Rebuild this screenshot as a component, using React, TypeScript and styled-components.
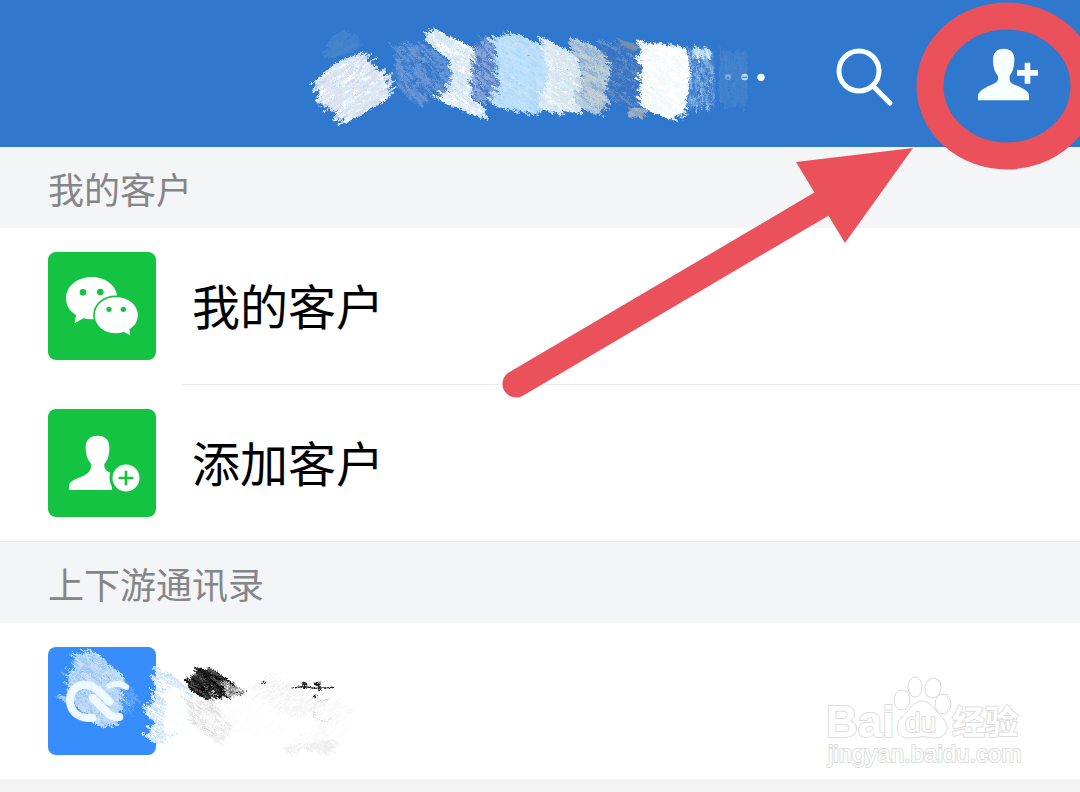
import React from 'react';
import styled, { createGlobalStyle } from 'styled-components';

const GlobalStyle = createGlobalStyle`
  * { box-sizing: border-box; }
  html { background: #f4f4f5; }
  body { margin: 0; font-family: "Noto Sans CJK SC", "Noto Sans", sans-serif; }
  button { font: inherit; color: inherit; }
`;

const Page = styled.div`
  position: relative;
  overflow: hidden;
`;

const Header = styled.header`
  display: grid;
  grid-template-columns: 1fr 480px 1fr;
  height: 147px;
  background: #3077ce;
`;

const Title = styled.h1`
  grid-column: 2;
  margin: 0;
  height: 147px;
  svg { display: block; width: 100%; height: 100%; }
`;

const Actions = styled.div`
  display: flex;
  justify-content: flex-end;
  align-items: center;
  gap: 84px;
  padding: 6px 42px 0 0;
`;

const IconButton = styled.button`
  display: block;
  padding: 0;
  border: 0;
  background: none;
  flex: none;
  svg { display: block; width: 60px; height: 60px; }
`;

const SectionTitle = styled.h2<{ $ruled?: boolean }>`
  margin: 0;
  padding: 15px 48px 13px;
  border-top: ${(p) => (p.$ruled ? '1px solid #ececee' : '0')};
  background: #f4f5f7;
  color: #858688;
  font-size: 36px;
  font-weight: 400;
  line-height: 53px;
`;

const List = styled.ul`
  margin: 0;
  padding: 0;
  list-style: none;
  background: #fff;
`;

const Row = styled.button`
  display: flex;
  align-items: stretch;
  width: 100%;
  min-height: 156px;
  padding: 0 0 0 48px;
  border: 0;
  background: none;
  text-align: left;
`;

const Item = styled.li`
  & + & > ${Row} { min-height: 157px; }
  & + & > ${Row} > span:last-child { border-top: 1px solid #ececec; }
`;

const Tile = styled.span<{ $color: string }>`
  position: relative;
  flex: none;
  align-self: flex-end;
  width: 108px;
  height: 108px;
  margin: 24px 26px 24px 0;
  border-radius: 8px;
  background: ${(p) => p.$color};
  & > svg { display: block; width: 108px; height: 108px; }
`;

const Label = styled.span`
  display: flex;
  flex: 1;
  align-items: center;
  padding: 0 0 4px 10px;
  font-size: 48px;
  line-height: 72px;
  color: #000;
`;

const Smudge = styled.span`
  position: absolute;
  left: 0;
  top: 0;
  svg { display: block; width: 312px; height: 116px; }
`;

const Footer = styled.footer`
  height: 13px;
  background: #f4f4f5;
`;

const Annotation = styled.svg`
  position: absolute;
  right: 0;
  top: 0;
  width: 600px;
  height: 410px;
  pointer-events: none;
`;

const Watermark = styled.svg`
  position: absolute;
  right: 50px;
  bottom: 12px;
  width: 210px;
  height: 110px;
  pointer-events: none;
`;

type Point = [number, number];
interface Patch {
  area: Point[];
  colors: string[];
  count: number;
  dir: Point;
  width?: number;
}

function randomizer(seed: number) {
  let s = seed;
  return () => {
    s = (s * 1664525 + 1013904223) % 4294967296;
    return s / 4294967296;
  };
}

function contains(area: Point[], x: number, y: number) {
  let inside = false;
  for (let i = 0, j = area.length - 1; i < area.length; j = i++) {
    const [xi, yi] = area[i];
    const [xj, yj] = area[j];
    if (yi > y !== yj > y && x < ((xj - xi) * (y - yi)) / (yj - yi) + xi) inside = !inside;
  }
  return inside;
}

/* Scatters short brush strokes over an area, one path for each colour. */
function Brush({ patch, seed }: { patch: Patch; seed: number }) {
  const rnd = randomizer(seed * 7919 + 17);
  const xs = patch.area.map((p) => p[0]);
  const ys = patch.area.map((p) => p[1]);
  const x0 = Math.min(...xs);
  const y0 = Math.min(...ys);
  const w = Math.max(...xs) - x0;
  const h = Math.max(...ys) - y0;
  const layers: { color: string; d: string }[] = [];
  const rounds = 6;
  for (let r = 0; r < rounds; r++) {
    patch.colors.forEach((color) => {
      let d = '';
      const n = patch.count / rounds / patch.colors.length;
      for (let i = 0; i < n; i++) {
        let x = x0 + rnd() * w;
        let y = y0 + rnd() * h;
        for (let t = 0; t < 20 && !contains(patch.area, x, y); t++) {
          x = x0 + rnd() * w;
          y = y0 + rnd() * h;
        }
        const k = rnd() < 0.08 ? 1.8 : 0.1 + rnd() * 0.7;
        d += `M${Math.round(x - patch.dir[0] * k)} ${Math.round(y - patch.dir[1] * k)}l${Math.round(
          patch.dir[0] * 2 * k,
        )} ${Math.round(patch.dir[1] * 2 * k)}`;
      }
      layers.push({ color, d });
    });
  }
  return (
    <g fill="none" strokeWidth={patch.width ?? 4}>
      {layers.map((l, i) => (
        <path key={i} d={l.d} stroke={l.color} />
      ))}
    </g>
  );
}

/* Breaks the edges of the strokes into grain. */
function Grain({ id }: { id: string }) {
  return (
    <filter id={id} x="-5%" y="-5%" width="110%" height="110%" colorInterpolationFilters="sRGB">
      <feTurbulence type="fractalNoise" baseFrequency="0.22" numOctaves="2" seed="4" result="noise" />
      <feDisplacementMap in="SourceGraphic" in2="noise" scale="12" xChannelSelector="R" yChannelSelector="G" />
    </filter>
  );
}

const titlePatches: Patch[] = [
  { area: [[95, 45], [165, 42], [170, 85], [100, 115], [80, 100]], colors: ['#3d80cd', '#4785cb'], count: 350, dir: [12, -8] },
  { area: [[55, 175], [110, 130], [170, 108], [210, 145], [260, 195], [255, 240], [150, 300], [80, 245]], colors: ['#e9f2fa', '#c9d8eb', '#ffffff', '#d9e9f7', '#dde1ee'], count: 2400, dir: [18, -12] },
  { area: [[285, 85], [380, 75], [460, 140], [440, 220], [330, 250], [300, 200]], colors: ['#4b83cd', '#5f91d4', '#3478c8', '#7199d5'], count: 1500, dir: [12, 12] },
  { area: [[380, 60], [420, 35], [545, 100], [520, 150], [515, 235], [560, 270], [535, 290], [420, 240], [460, 205], [460, 130]], colors: ['#e5f4fb', '#c8dff5', '#ffffff', '#d8e8f0'], count: 1800, dir: [14, 9] },
  { area: [[550, 60], [600, 60], [640, 110], [610, 235], [520, 240], [520, 150]], colors: ['#5885cc', '#799bd3', '#4677bf', '#90addb'], count: 1200, dir: [10, 12] },
  { area: [[590, 60], [650, 45], [750, 90], [765, 245], [700, 275], [580, 255], [610, 210]], colors: ['#b8dcf9', '#c8e4fb', '#afd6f7', '#bce1fb'], count: 2400, dir: [18, 11] },
  { area: [[735, 60], [835, 110], [850, 250], [820, 275], [720, 265], [750, 180]], colors: ['#e4f0f7', '#f6fafb', '#cbe2f1', '#dce6ee'], count: 1700, dir: [14, 10] },
  { area: [[820, 60], [890, 85], [930, 125], [910, 245], [890, 280], [840, 260], [855, 170]], colors: ['#a8bfd4', '#b8cad8', '#8bafd5', '#c3d0d8'], count: 1400, dir: [14, 10] },
  { area: [[900, 65], [1000, 80], [1020, 130], [1010, 270], [930, 235], [940, 145]], colors: ['#4e7fbe', '#3b74c0', '#6a91c7', '#3274cb'], count: 1300, dir: [12, 9] },
  { area: [[970, 65], [1020, 80], [1020, 90], [980, 80]], colors: ['#778fae'], count: 40, dir: [12, 8] },
  { area: [[1000, 265], [1040, 270], [1020, 290], [985, 290]], colors: ['#8ba1bd', '#a4b3c4'], count: 70, dir: [10, 6] },
  { area: [[1035, 75], [1160, 90], [1165, 145], [1150, 260], [1105, 295], [1030, 260], [1030, 155]], colors: ['#ffffff', '#f5fbfd', '#ffffff', '#f2f9fc'], count: 2500, dir: [15, 10] },
  { area: [[1160, 90], [1240, 100], [1245, 260], [1160, 260], [1175, 160]], colors: ['#6fa0da', '#518acf', '#8bb7e4', '#3b7bcd'], count: 800, dir: [1, 12] },
  { area: [[1180, 88], [1235, 88], [1230, 115], [1180, 115]], colors: ['#b9dcf3', '#d5eef9'], count: 60, dir: [4, 10] },
  { area: [[1258, 95], [1340, 100], [1340, 255], [1260, 255]], colors: ['#4785cc', '#3f80cc', '#4483cc'], count: 400, dir: [1, 18] },
];

const contactPatches: Patch[] = [
  { area: [[115, 60], [170, 55], [250, 125], [255, 190], [220, 260], [180, 275], [130, 235], [85, 180], [90, 130]], colors: ['#b9d8f6', '#cfe5f9', '#9cc7f6', '#c0dbf5'], count: 1500, dir: [14, 9] },
  { area: [[255, 130], [290, 185], [275, 230], [245, 245]], colors: ['#66a9f5', '#4a99f8'], count: 180, dir: [8, 8], width: 3 },
  { area: [[50, 185], [80, 185], [90, 215]], colors: ['#a5cdf8'], count: 20, dir: [12, 6], width: 3 },
  { area: [[350, 100], [380, 110], [430, 150], [440, 190], [390, 290], [350, 325], [325, 310], [350, 265], [318, 235], [350, 205]], colors: ['#bcdcf8', '#e1effa', '#ffffff', '#d2e6f8'], count: 1300, dir: [13, 9] },
  { area: [[390, 150], [445, 180], [455, 280], [375, 295]], colors: ['#ffffff', '#fbfdfe'], count: 600, dir: [14, 9] },
  { area: [[440, 195], [560, 210], [600, 240], [550, 320], [520, 320], [450, 270]], colors: ['#ffffff', '#f4f4f4', '#d0d0cd', '#ffffff', '#e8e8e8'], count: 900, dir: [11, 8], width: 2 },
  { area: [[530, 210], [620, 200], [740, 290], [700, 310], [590, 290]], colors: ['#ffffff', '#fdfdfd'], count: 700, dir: [14, 9] },
  { area: [[470, 110], [520, 105], [570, 140], [595, 160], [545, 190], [475, 180], [450, 155]], colors: ['#111111', '#333333', '#000000', '#555555', '#202020'], count: 440, dir: [13, 8] },
  { area: [[560, 140], [600, 160], [590, 180], [550, 190]], colors: ['#c9c9c9', '#777777', '#ffffff'], count: 100, dir: [9, 6], width: 2 },
  { area: [[620, 160], [690, 120], [760, 150], [850, 200], [860, 250], [740, 240]], colors: ['#ffffff', '#f3f3f2', '#ededed', '#fafafa'], count: 700, dir: [12, -9], width: 2 },
  { area: [[730, 345], [850, 285], [895, 325], [860, 360], [790, 340], [750, 355]], colors: ['#ebebeb', '#f3f3f3', '#efefef'], count: 350, dir: [10, 8], width: 3 },
  { area: [[720, 340], [830, 280], [860, 200], [930, 210], [920, 300]], colors: ['#fcfcfc', '#fafafa', '#ffffff'], count: 300, dir: [14, -9] },
];

function SearchIcon() {
  return (
    <svg viewBox="0 0 60 60" fill="none" stroke="#f8ffff" aria-hidden="true">
      <circle cx="25" cy="24" r="20" strokeWidth="5" />
      <path d="M40 40L56 56" strokeWidth="5" strokeLinecap="round" />
    </svg>
  );
}

function AddPersonIcon() {
  return (
    <svg viewBox="474 142 180 180" fill="#f8ffff" aria-hidden="true">
      <path d="M551 147C571 147 582 158 583 176C583 199 580 215 569 228V241C571 251 580 254 592 258C611 266 627 277 627 286V302H474V286C476 276 494 265 511 257C523 252 532 249 534 239V229C523 216 519 201 519 178C520 158 531 147 551 147Z" />
      <path d="M614 189h17v22h23v17h-23v24h-17v-24h-23v-17h23z" />
    </svg>
  );
}

function WeChatIcon() {
  return (
    <svg viewBox="54 306 324 324" aria-hidden="true">
      <path fill="#fff" d="M185 381C228 381 262 409 262 445C262 481 228 508 185 508C176 508 168 507 160 505L134 520L138 495C119 484 108 466 108 445C108 409 142 381 185 381Z" />
      <g fill="#15c343">
        <circle cx="159" cy="427" r="10" />
        <circle cx="211" cy="426" r="10" />
      </g>
      <path fill="#fff" stroke="#15c343" strokeWidth="5" d="M258 439C297 439 326 464 326 496C326 514 317 529 301 539L304 560L281 548C274 551 266 552 258 552C219 552 192 527 192 496C192 464 219 439 258 439Z" />
      <g fill="#15c343">
        <circle cx="237" cy="478" r="8" />
        <circle cx="280" cy="478" r="8" />
      </g>
    </svg>
  );
}

function AddCustomerIcon() {
  return (
    <svg viewBox="54 57 324 324" aria-hidden="true">
      <path fill="#fff" d="M203 137C226 137 238 151 238 171C239 193 234 209 223 222C221 238 231 244 246 251V300H117V286C118 275 134 269 157 259C174 252 184 242 184 222C172 209 167 193 167 171C167 151 180 137 203 137Z" />
      <circle cx="288" cy="264" r="45" fill="#fff" stroke="#15c343" strokeWidth="9" />
      <path d="M266 264h44M288 242v44" stroke="#15c343" strokeWidth="8" />
    </svg>
  );
}

function ContactScribble() {
  return (
    <svg viewBox="24 36 936 348" aria-hidden="true">
      <defs><Grain id="contact-grain" /></defs>
      <g filter="url(#contact-grain)">
        {contactPatches.map((p, i) => (
          <Brush key={i} patch={p} seed={i + 31} />
        ))}
      </g>
      <g fill="none" stroke="#eef8ff" strokeWidth="24" strokeLinecap="round" strokeLinejoin="round">
        <path d="M209 200L174 166C158 151 143 148 126 150C103 155 89 174 90 199C92 229 113 247 142 249H157" />
        <path d="M159 190L206 237Q218 248 238 246" />
        <path d="M208 152Q237 139 259 156" strokeWidth="17" />
      </g>
      <g stroke="#222" fill="none" filter="url(#contact-grain)">
        <path d="M755 160L790 154L825 160L880 157" strokeWidth="4" />
        <path d="M785 145l17 2M793 140v22M820 147h20M838 140v28" strokeWidth="7" />
        <path d="M665 143h12M820 181l10 7" strokeWidth="6" />
        <path d="M825 245q-10-40 20-48l24-5M830 250q25 20 45-3" stroke="#c9c9c9" strokeWidth="3" strokeDasharray="5 3" />
      </g>
    </svg>
  );
}

export default function App() {
  return (
    <>
      <GlobalStyle />
      <Page>
        <Header>
          <Title aria-label="通讯录">
            <svg viewBox="0 -60 1440 441" aria-hidden="true">
              <defs><Grain id="title-grain" /></defs>
              <g filter="url(#title-grain)">
                {titlePatches.map((p, i) => (
                  <Brush key={i} patch={p} seed={i + 1} />
                ))}
              </g>
              <circle cx="1284" cy="171" r="9" fill="#7eaedd" />
              <circle cx="1334" cy="171" r="10" fill="#c3e1f4" />
              <circle cx="1284" cy="174" r="4" fill="#4785cc" />
              <path d="M1326 172h16" stroke="#5b91cf" strokeWidth="5" />
              <circle cx="1383" cy="172" r="11" fill="#f8ffff" />
            </svg>
          </Title>
          <Actions>
            <IconButton type="button" aria-label="搜索"><SearchIcon /></IconButton>
            <IconButton type="button" aria-label="添加"><AddPersonIcon /></IconButton>
          </Actions>
        </Header>
        <main>
          <SectionTitle>我的客户</SectionTitle>
          <List>
            <Item>
              <Row type="button">
                <Tile $color="#15c343"><WeChatIcon /></Tile>
                <Label>我的客户</Label>
              </Row>
            </Item>
            <Item>
              <Row type="button">
                <Tile $color="#15c343"><AddCustomerIcon /></Tile>
                <Label>添加客户</Label>
              </Row>
            </Item>
          </List>
          <SectionTitle $ruled>上下游通讯录</SectionTitle>
          <List>
            <Item>
              <Row type="button" aria-label="联系人">
                <Tile $color="#368dfb">
                  <Smudge><ContactScribble /></Smudge>
                </Tile>
                <Label />
              </Row>
            </Item>
          </List>
        </main>
        <Footer />
        <Watermark viewBox="820 670 210 110" aria-hidden="true">
          <g fill="#fff" stroke="#dadada" strokeWidth="1">
            <ellipse cx="902" cy="700" rx="8" ry="10" />
            <ellipse cx="915" cy="687" rx="7" ry="10" />
            <ellipse cx="933" cy="688" rx="8" ry="10" transform="rotate(12 933 688)" />
            <ellipse cx="943" cy="704" rx="8" ry="10" />
            <path d="M922 701C931 701 934 710 941 716C952 727 947 738 935 738C928 738 925 736 920 737C914 738 912 738 907 738C895 737 896 724 901 718C909 712 912 701 922 701Z" />
          </g>
          <g fill="#fff" stroke="#dddddd" strokeWidth="2" paintOrder="stroke" strokeLinejoin="round">
            <g fontFamily='"Liberation Sans", sans-serif'>
              <text x="826" y="737" fontSize="44" fontWeight="700">Bai</text>
              <text x="905" y="732" fontSize="28">du</text>
              <text x="828" y="762" fontSize="24">jingyan.baidu.com</text>
            </g>
            <text x="952" y="734" fontSize="33" fontWeight="700" fontFamily='"Noto Sans CJK SC", sans-serif'>经验</text>
          </g>
        </Watermark>
        <Annotation viewBox="480 0 600 410" aria-hidden="true">
          <ellipse cx="1007" cy="86" rx="77" ry="70" fill="none" stroke="#eb515b" strokeWidth="27" />
          <path d="M516 384L830 199" stroke="#eb515b" strokeWidth="27" strokeLinecap="round" />
          <path d="M913 148L796 162L845 243Z" fill="#eb515b" />
        </Annotation>
      </Page>
    </>
  );
}
